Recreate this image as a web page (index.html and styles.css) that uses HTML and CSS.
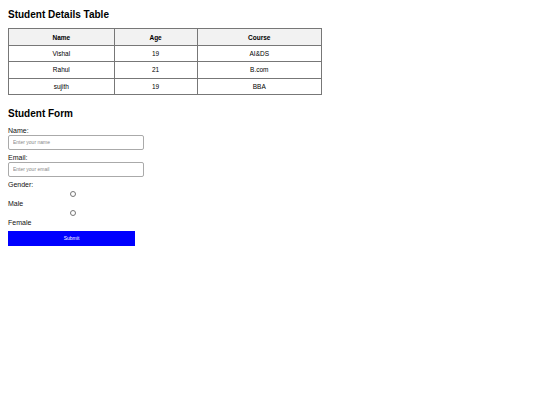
FILE: index.html
```html
<!DOCTYPE html>
<html>
<head>
<meta charset="utf-8">
<link rel="stylesheet" href="styles.css">
</head>
<body>
<h2 class="title">Student Details Table</h2>
<table class="students">
  <thead>
    <tr><th class="c-name">Name</th><th class="c-age">Age</th><th class="c-course">Course</th></tr>
  </thead>
  <tbody>
    <tr><td>Vishal</td><td>19</td><td>AI&amp;DS</td></tr>
    <tr><td>Rahul</td><td>21</td><td>B.com</td></tr>
    <tr><td>sujith</td><td>19</td><td>BBA</td></tr>
  </tbody>
</table>
<h2 class="title form-title">Student Form</h2>
<form class="form">
  <label class="lbl">Name:</label>
  <input class="field" type="text" placeholder="Enter your name">
  <label class="lbl">Email:</label>
  <input class="field" type="email" placeholder="Enter your email">
  <label class="lbl">Gender:</label>
  <input class="radio" type="radio" name="g">
  <label class="lbl">Male</label>
  <input class="radio" type="radio" name="g">
  <label class="lbl">Female</label>
  <button class="submit" type="button">Submit</button>
</form>
</body>
</html>
```
FILE: styles.css
```css
html, body {
  margin: 0;
  padding: 0;
  background: #fff;
}
body {
  padding: 8px;
  font-family: "Liberation Sans", Arial, sans-serif;
  color: #000;
}
.title {
  font-size: 10px;
  font-weight: bold;
  margin: 1px 0 7px 0;
  line-height: 12px;
}
.form-title {
  margin-top: 13px;
  margin-bottom: 6px;
}
.students {
  border-collapse: collapse;
  width: 314px;
  font-size: 6.5px;
  color: #000;
}
.students th, .students td {
  border: 1px solid #777;
  text-align: center;
  height: 15.3px;
  padding: 0;
}
.students th {
  background: #f2f2f2;
  font-weight: bold;
  height: 16px;
}
.c-name { width: 106px; }
.c-age { width: 83px; }
.c-course { width: 125px; }
.form {
  display: flex;
  flex-direction: column;
  align-items: flex-start;
}
.lbl {
  font-size: 7px;
  line-height: 9px;
  color: #111;
}
.field {
  box-sizing: border-box;
  width: 136px;
  height: 15px;
  margin: 0 0 3px 0;
  border: 1px solid #aaa;
  border-radius: 2px;
  padding: 0 4px;
  font-size: 5px;
  font-family: "Liberation Sans", Arial, sans-serif;
}
.field::placeholder {
  color: #888;
}
.radio {
  width: 6px;
  height: 6px;
  margin: 2px 0 2px 62px;
  accent-color: #888;
}
.submit {
  margin-top: 4px;
  width: 127px;
  height: 15px;
  background: #0000ff;
  color: #fff;
  border: none;
  font-size: 5px;
  font-family: "Liberation Sans", Arial, sans-serif;
  padding: 0;
}
```
